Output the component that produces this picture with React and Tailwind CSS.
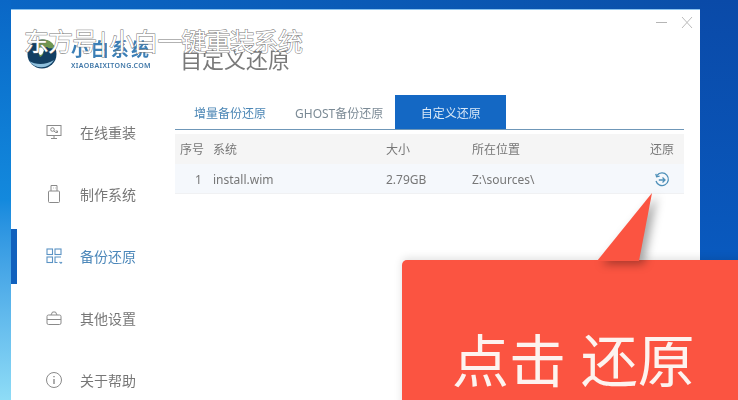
const menu = [
  { label: "在线重装", icon: MonitorIcon },
  { label: "制作系统", icon: UsbIcon },
  { label: "备份还原", icon: BackupIcon, active: true },
  { label: "其他设置", icon: CaseIcon },
  { label: "关于帮助", icon: InfoIcon },
];

function MonitorIcon() {
  return (
    <svg width="18" height="18" viewBox="0 0 18 18" fill="none" stroke="currentColor" strokeWidth="1">
      <rect x="2" y="2.500" width="14" height="10" />
      <path d="M9 12.500v3M6 15.500h6" />
      <circle cx="7.500" cy="6.500" r="1.800" />
      <path d="M9 8l1.500 1.500h2v-1.500h-2" />
    </svg>
  );
}

function UsbIcon() {
  return (
    <svg width="18" height="20" viewBox="0 0 18 20" fill="none" stroke="currentColor" strokeWidth="1">
      <path d="M6 7V1.500h6V7" />
      <rect x="3.500" y="7" width="11" height="11.500" rx="1" />
      <path d="M8 4h.5M10 4h.5" />
    </svg>
  );
}

function BackupIcon() {
  return (
    <svg width="18" height="18" viewBox="0 0 18 18" fill="none" stroke="currentColor" strokeWidth="1.100">
      <rect x="2" y="2" width="5.500" height="5.500" />
      <rect x="2" y="10" width="5.500" height="5.500" />
      <rect x="10" y="2" width="6" height="5.500" />
      <path d="M16 10h-6v5.500h2.500M14.500 15l1.500 1.200 1-1.200" />
    </svg>
  );
}

function CaseIcon() {
  return (
    <svg width="18" height="18" viewBox="0 0 18 18" fill="none" stroke="currentColor" strokeWidth="1">
      <rect x="2" y="6" width="14" height="9.500" rx="1.500" />
      <path d="M6 6l1.500-3h3L12 6M2 10.500h14" />
    </svg>
  );
}

function InfoIcon() {
  return (
    <svg width="18" height="18" viewBox="0 0 18 18" fill="none" stroke="currentColor" strokeWidth="1">
      <circle cx="9" cy="9" r="7.500" />
      <path d="M9 8v5M9 5v1.200" strokeWidth="1.400" />
    </svg>
  );
}

function RestoreIcon() {
  return (
    <svg width="16" height="16" viewBox="0 0 16 16" fill="none" stroke="#4d8fb8" strokeWidth="1.300">
      <path d="M3 3.500A6.300 6.300 0 1 1 2 9" />
      <path d="M1.800 1.800l.8 3 3-.6" />
      <path d="M4.800 8h6M8.500 5.500L11 8l-2.500 2.500" />
    </svg>
  );
}

function Globe() {
  return (
    <svg width="30" height="33" viewBox="0 0 30 33">
      <circle cx="15" cy="17" r="14.500" fill="#123f63" />
      <path d="M2 24a15 15 0 0 0 25-1c-8 5-18 5-25 1z" fill="#8fc0dd" />
      <path d="M11 4c8-4 16 1 17 8-4-1-6 0-8-2-3 1-4 0-5 1 3 4 1 8-2 9-2-5-4-11-2-16z" fill="#6f9650" />
      <path d="M12 11c3-1 4 0 5 2-1 3-2 5-4 5-2-2-2-4-1-7z" fill="#ffffff" />
    </svg>
  );
}

export default function App() {
  return (
    <div className="relative flex h-[400px] w-[738px] overflow-hidden bg-[#0a5cbd] font-['Noto_Sans','Noto_Sans_CJK_SC',sans-serif]">
      <div className="h-full w-[11px] shrink-0 bg-gradient-to-b from-[#0a67c6] via-[#1389dd] to-[#8edcf6]" />

      <div className="flex w-[689px] shrink-0 flex-col">
        <div className="h-[9px] shrink-0 bg-gradient-to-r from-[#0a66c4] to-[#0a4fa9]" />
        <div className="flex flex-1 border-t border-[#8cc4ee] bg-white blur-[0.4px]">
          <aside className="w-[164px] shrink-0">
            <div className="flex h-[91px] items-start pl-[16px] pt-[27px]">
              <Globe />
              <div className="ml-[14px] flex flex-col pt-[1px]">
                <span className="text-[18px] leading-[23px] font-bold tracking-[2px] text-[#3c7fb6]">小白系统</span>
                <span className="mt-[1px] text-[7px] leading-[8px] font-semibold tracking-[0.350px] text-[#3f77a8]">XIAOBAIXITONG.COM</span>
              </div>
            </div>
            {menu.map((item) => {
              const Icon = item.icon;
              return (
                <div key={item.label} className="flex h-[62px] items-center">
                  <div className={item.active ? "h-[55px] w-[6px] bg-[#1161bd]" : "h-[55px] w-[6px]"} />
                  <div className={item.active ? "ml-[28px] flex w-[18px] justify-center text-[#5b93c4]" : "ml-[28px] flex w-[18px] justify-center text-[#8a8a8a]"}>
                    <Icon />
                  </div>
                  <span className={item.active ? "ml-[17px] text-[14px] text-[#4d88ba]" : "ml-[17px] text-[14px] text-[#777]"}>
                    {item.label}
                  </span>
                </div>
              );
            })}
          </aside>

          <main className="flex-1">
            <div className="flex h-[85px] justify-between pr-[7px]">
              <h1 className="pl-[5px] pt-[34px] text-[22px] leading-[30px] font-normal text-[#7a7a7a]">自定义还原</h1>
              <div className="flex items-start gap-[14px] pt-[6px]">
                <div className="mt-[6px] h-px w-[11px] bg-[#b5b5b5]" />
                <svg width="12" height="13" viewBox="0 0 12 13" stroke="#bcbcbc" strokeWidth="1">
                  <path d="M1 1l10 11M11 1L1 12" />
                </svg>
              </div>
            </div>

            <div className="mr-[16px] flex h-[35px] items-end border-b border-[#6f97b8] text-[12px] leading-[31px]">
              <span className="ml-[19px] text-[#4b86b5]">增量备份还原</span>
              <span className="ml-[29px] text-[#7b8a95]">GHOST备份还原</span>
              <span className="ml-[12px] flex h-[34px] w-[111px] justify-center bg-[#1468c4] pt-[3px] text-[#d9e8f7]">自定义还原</span>
            </div>

            <div className="mr-[16px] mt-[4px] text-[12px] text-[#777]">
              <div className="flex h-[30px] items-center bg-[#f5f5f5] pt-[2px]">
                <span className="w-[38px] pl-[5px]">序号</span>
                <span className="w-[173px]">系统</span>
                <span className="w-[86px]">大小</span>
                <span className="w-[178px]">所在位置</span>
                <span>还原</span>
              </div>
              <div className="flex h-[30px] items-center border-b border-[#f0f1f3] bg-[#f5f8fc] pt-[2px]">
                <span className="w-[38px] pl-[20px]">1</span>
                <span className="w-[173px]">install.wim</span>
                <span className="w-[86px]">2.79GB</span>
                <span className="w-[178px]">Z:\sources\</span>
                <span className="ml-[4px]"><RestoreIcon /></span>
              </div>
            </div>
          </main>
        </div>
      </div>

      <div className="h-full flex-1 bg-gradient-to-b from-[#0a4aa8] to-[#0862cb]" />

      <div className="absolute left-[402px] top-[260px] flex h-[150px] w-[350px] rounded-[5px] bg-[#fb5441] pl-[50px] pt-[60px] shadow-[0_-2px_8px_rgba(0,0,0,0.12)] blur-[0.4px]">
        <span className="text-[57px] leading-[80px] font-normal text-[#fdf3ef]">点击 还原</span>
      </div>
      <svg className="absolute left-[590px] top-[190px] drop-shadow-[5px_3px_5px_rgba(0,0,0,0.35)]" width="66" height="72" viewBox="0 0 66 72">
        <path d="M62 3L7 71h42z" fill="#fb5441" />
      </svg>

      <span className="absolute left-[24px] top-[23px] text-[25px] leading-[36px] tracking-[-0.900px] text-white [-webkit-text-stroke:1px_#777] [paint-order:stroke_fill]">
        东方号|小白一键重装系统
      </span>
    </div>
  );
}
